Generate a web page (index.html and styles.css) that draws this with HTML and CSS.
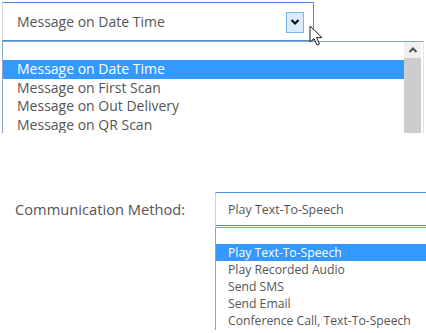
FILE: index.html
```html
<!DOCTYPE html>
<html lang="en">
<head>
    <meta charset="UTF-8">
    <title>Message settings</title>
    <link rel="stylesheet" href="styles.css">
</head>
<body>
<section class="trigger-box">
	<div class="select-box select-main">
		<span class="select-text">Message on Date Time</span>
		<span class="select-btn">
			<svg width="10" height="8" viewBox="0 0 10 8"><path d="M1.5 2 L5 5.5 L8.5 2" fill="none" stroke="#111" stroke-width="2.2"/></svg>
		</span>
	</div>
	<div class="drop-list drop-main">
		<ul class="drop-items">
			<li class="drop-item empty"></li>
			<li class="drop-item active">Message on Date Time</li>
			<li class="drop-item">Message on First Scan</li>
			<li class="drop-item">Message on Out Delivery</li>
			<li class="drop-item">Message on QR Scan</li>
		</ul>
		<div class="scroll-bar">
			<span class="scroll-up">
				<svg width="10" height="8" viewBox="0 0 10 8"><path d="M1.5 6 L5 2.5 L8.5 6" fill="none" stroke="#505050" stroke-width="2"/></svg>
			</span>
			<span class="scroll-thumb"></span>
		</div>
	</div>
	<svg class="cursor" width="16" height="22" viewBox="0 0 16 22"><path d="M1 1 L1 17 L5 13.5 L8 20 L10.5 19 L7.6 12.6 L13 12.6 Z" fill="#fff" stroke="#222" stroke-width="1"/></svg>
</section>

<section class="method-box">
	<div class="method-label">Communication Method:</div>
	<div class="method-field">
		<div class="select-box select-method">
			<span class="select-text">Play Text-To-Speech</span>
		</div>
		<ul class="drop-list drop-method">
			<li class="drop-item empty"></li>
			<li class="drop-item active">Play Text-To-Speech</li>
			<li class="drop-item">Play Recorded Audio</li>
			<li class="drop-item">Send SMS</li>
			<li class="drop-item">Send Email</li>
			<li class="drop-item">Conference Call, Text-To-Speech</li>
		</ul>
	</div>
</section>
</body>
</html>
```

FILE: styles.css
```css
*{
	padding:0;margin:0;box-sizing:border-box;
}
body{font-family:'Open Sans','Noto Sans',sans-serif;color:#555;background:#fff;overflow:hidden;}
ul{list-style:none}

.trigger-box{
	position:relative;
	padding:2px 0 0 2px;
}
.select-box{
	display:flex;
	align-items:center;
	justify-content:space-between;
	border:1px solid #4a90e2;
	border-left-color:#d4d4d4;
	background:#fff;
}
.select-main{
	width:312px;
	height:39px;
	padding:0 9px 0 14px;
	font-size:14px;
}
.select-btn{
	display:flex;
	align-items:center;
	justify-content:center;
	width:18px;
	height:21px;
	margin-top:1px;
	background:#dcebfc;
	border:1px solid #7eb4ea;
}
.cursor{
	position:absolute;
	left:309px;
	top:25px;
}

.drop-list{
	border:1px solid #8fa3bb;
	border-bottom:0;
	background:#fff;
}
.drop-main{
	display:flex;
	width:422px;
	height:92px;
	overflow:hidden;
	font-size:14px;
	border-right-color:#e4e4e4;
}
.drop-items{flex:1;}
.drop-main .drop-item{
	height:18.5px;
	line-height:18.5px;
	padding-left:14px;
	white-space:nowrap;
}
.drop-main .drop-item.empty{height:18px;}
.drop-item.active{
	background:#3399ff;
	color:#fff;
}
.scroll-bar{
	display:flex;
	flex-direction:column;
	width:17px;
	margin-right:2px;
}
.scroll-up{
	display:flex;
	align-items:center;
	justify-content:center;
	height:16px;
	background:#f0f0f0;
}
.scroll-thumb{
	flex:1;
	background:#cdcdcd;
}

.method-box{
	display:flex;
	margin-top:59px;
}
.method-label{
	flex-shrink:0;
	width:215px;
	padding:7px 0 0 15px;
	font-size:14.7px;
}
.method-field{flex-shrink:0;width:230px;}
.select-method{
	height:34px;
	padding-left:12px;
	font-size:12.4px;
	border-right:0;
	margin-bottom:1px;
}
.drop-method{
	height:103px;
	font-size:12.2px;
	border-right:0;
}
.drop-method .drop-item{
	height:17px;
	line-height:17px;
	padding-left:12px;
	white-space:nowrap;
}
.drop-method .drop-item.empty{height:16px;}
```
